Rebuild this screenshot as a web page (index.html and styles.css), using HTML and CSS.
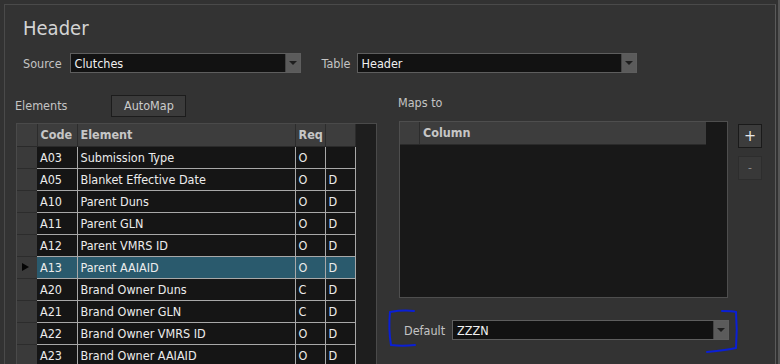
FILE: index.html
```html
<!DOCTYPE html>
<html>
<head>
<meta charset="utf-8">
<link rel="stylesheet" href="styles.css">
</head>
<body>
<div class="frame">
  <div class="window">
    <div class="top">
      <h1 class="title">Header</h1>
      <div class="selrow">
        <span class="lbl">Source</span>
        <div class="combo combo-source"><span class="val">Clutches</span><span class="arrow"></span></div>
        <span class="lbl lbl-table">Table</span>
        <div class="combo combo-table"><span class="val">Header</span><span class="arrow"></span></div>
      </div>
    </div>
    <div class="lower">
      <div class="left">
        <div class="elrow">
          <span class="lbl">Elements</span>
          <button class="btn automap">AutoMap</button>
        </div>
        <div class="grid">
          <table class="tbl">
            <thead>
              <tr><th class="rh"></th><th class="c-code">Code</th><th class="c-el">Element</th><th class="c-req">Req</th><th class="c-d"></th></tr>
            </thead>
            <tbody>
              <tr><td class="rh"></td><td>A03</td><td>Submission Type</td><td>O</td><td></td></tr>
              <tr><td class="rh"></td><td>A05</td><td>Blanket Effective Date</td><td>O</td><td>D</td></tr>
              <tr><td class="rh"></td><td>A10</td><td>Parent Duns</td><td>O</td><td>D</td></tr>
              <tr><td class="rh"></td><td>A11</td><td>Parent GLN</td><td>O</td><td>D</td></tr>
              <tr><td class="rh"></td><td>A12</td><td>Parent VMRS ID</td><td>O</td><td>D</td></tr>
              <tr class="sel"><td class="rh"><span class="cur"></span></td><td>A13</td><td>Parent AAIAID</td><td>O</td><td>D</td></tr>
              <tr><td class="rh"></td><td>A20</td><td>Brand Owner Duns</td><td>C</td><td>D</td></tr>
              <tr><td class="rh"></td><td>A21</td><td>Brand Owner GLN</td><td>C</td><td>D</td></tr>
              <tr><td class="rh"></td><td>A22</td><td>Brand Owner VMRS ID</td><td>O</td><td>D</td></tr>
              <tr><td class="rh"></td><td>A23</td><td>Brand Owner AAIAID</td><td>O</td><td>D</td></tr>
            </tbody>
          </table>
        </div>
      </div>
      <div class="right">
        <div class="mapsrow"><span class="lbl">Maps to</span></div>
        <div class="maparea">
          <div class="mapgrid">
            <div class="mhead"><span class="mrh"></span><span class="mcol">Column</span></div>
          </div>
          <div class="pm">
            <button class="btn sq plus">+</button>
            <button class="btn sq minus">-</button>
          </div>
        </div>
        <div class="defrow">
          <span class="lbl">Default</span>
          <div class="combo combo-def"><span class="val">ZZZN</span><span class="arrow"></span></div>
        </div>
      </div>
    </div>
  </div>
  <svg class="marks" width="780" height="364" viewBox="0 0 780 364">
    <path d="M414 311 C404 310 396 311 390 312 C389 322 389 333 391 345 C398 346 407 346 415 345" fill="none" stroke="#0a1fd6" stroke-width="2" stroke-linecap="round"/>
    <path d="M722 311 C728 311 732 311 736 312 C737 324 737 336 736 348 C728 350 718 351 707 352" fill="none" stroke="#0a1fd6" stroke-width="2" stroke-linecap="round"/>
  </svg>
</div>
</body>
</html>
```
FILE: styles.css
```css
* { box-sizing: border-box; }
html, body { margin: 0; padding: 0; }
body {
  width: 780px;
  height: 364px;
  overflow: hidden;
  background: #2b2b2b;
  font-family: "DejaVu Sans Condensed", "DejaVu Sans", sans-serif;
  font-size: 12.5px;
  color: #c8c8c8;
}
.frame {
  position: relative;
  width: 780px;
  height: 364px;
  padding: 4px 2px 0 4px;
  background: #323232;
  border-right: 2px solid #555;
}
.window {
  height: 100%;
  border-top: 1px solid #4a4a4a;
  border-left: 1px solid #4a4a4a;
  border-right: 1px solid #5a5a5a;
  background: #333333;
}
.top { padding: 0 0 0 18px; }
.title {
  margin: 0;
  padding-top: 11px;
  height: 48px;
  font-size: 20px;
  font-weight: normal;
  line-height: 24px;
  color: #d4d4d4;
}
.selrow {
  display: flex;
  align-items: center;
  height: 20px;
}
.lbl { color: #c4c4c4; white-space: nowrap; }
.combo {
  position: relative;
  height: 20px;
  background: #121212;
  border: 1px solid #5e5e5e;
  display: flex;
  align-items: center;
  color: #f0f0f0;
}
.combo .val { padding-left: 4px; flex: 1; }
.combo .arrow {
  width: 15px;
  height: 18px;
  background: #5b5b5b;
  border-left: 1px solid #444;
  display: flex;
  align-items: center;
  justify-content: center;
}
.combo .arrow::after {
  content: "";
  border-left: 4px solid transparent;
  border-right: 4px solid transparent;
  border-top: 4px solid #1e1e1e;
}
.combo-source { width: 231px; margin-left: 8px; }
.lbl-table { margin-left: 21px; }
.combo-table { width: 280px; margin-left: 6px; }

.lower {
  display: flex;
  margin-top: 20px;
  padding-left: 10px;
}
.left { width: 362px; }
.elrow {
  display: flex;
  align-items: center;
  height: 23px;
  margin-top: 1px;
}
.btn {
  font-family: inherit;
  font-size: 12.5px;
  color: #cccccc;
  background: #3b3b3b;
  border: 1px solid #1c1c1c;
  padding: 0;
  cursor: default;
}
.automap { width: 75px; height: 22px; margin-left: 44px; }
.grid {
  margin-top: 6px;
  margin-left: 1px;
  height: 241px;
  width: 361px;
  background: #1e1e1e;
  border-top: 1px solid #4a4a4a;
  border-left: 1px solid #4a4a4a;
  border-right: 1px solid #4a4a4a;
  overflow: hidden;
}
.tbl {
  border-collapse: collapse;
  table-layout: fixed;
  width: 338px;
}
.tbl th, .tbl td {
  height: 22px;
  padding: 0 0 0 3px;
  text-align: left;
  white-space: nowrap;
  overflow: hidden;
}
.tbl th {
  background: #3d3d3d;
  color: #c6c6c6;
  font-weight: bold;
  border-right: 1px solid #2c2c2c;
  border-bottom: 1px solid #2a2a2a;
}
.tbl th.rh { width: 20px; }
.tbl th.c-code { width: 40px; }
.tbl th.c-el { width: 218px; }
.tbl th.c-req { width: 30px; }
.tbl th.c-d { width: 30px; }
.tbl td {
  background: #151515;
  color: #ececec;
  border-right: 1px solid #a8a8a8;
  border-bottom: 1px solid #a8a8a8;
}
.tbl td.rh {
  background: #3a3a3a;
  border-right: none;
  border-bottom: 1px solid #2c2c2c;
  position: relative;
}
.tbl tr.sel td { background: #2a5a6d; }
.tbl tr.sel td.rh { background: #3a3a3a; }
.cur {
  position: absolute;
  left: 5px;
  top: 6px;
  border-top: 4px solid transparent;
  border-bottom: 4px solid transparent;
  border-left: 7px solid #050505;
}

.right {
  margin-left: 21px;
  width: 368px;
}
.mapsrow { height: 19px; display: flex; align-items: center; }
.maparea { display: flex; margin-top: 9px; }
.mapgrid {
  margin-left: 1px;
  width: 329px;
  height: 177px;
  background: #181818;
  border: 1px solid #4e4e4e;
}
.mhead { display: flex; height: 23px; width: 306px; background: #3d3d3d; border-bottom: 1px solid #2a2a2a; }
.mrh { width: 20px; border-right: 1px solid #2c2c2c; }
.mcol { padding-left: 3px; font-weight: bold; color: #c6c6c6; line-height: 22px; }
.pm {
  display: flex;
  flex-direction: column;
  gap: 8px;
  margin-left: 10px;
  margin-top: 3px;
}
.sq { width: 24px; height: 24px; font-size: 16px; line-height: 20px; }
.plus { color: #e6e6e6; border-color: #1a1a1a; background: #3c3c3c; }
.minus { color: #8a8a8a; border-color: #2d2d2d; background: #383838; font-size: 12px; }
.defrow {
  display: flex;
  align-items: center;
  margin-top: 22px;
  padding-left: 6px;
  height: 20px;
}
.combo-def { width: 277px; margin-left: 7px; }
.marks { position: absolute; left: 0; top: 0; pointer-events: none; }
```
